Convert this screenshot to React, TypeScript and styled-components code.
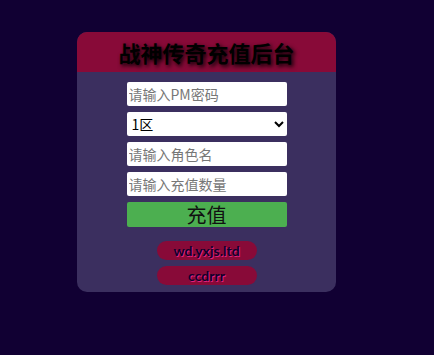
import React from "react";
import styled, { createGlobalStyle } from "styled-components";

const Global = createGlobalStyle`
  html, body { margin: 0; padding: 0; background: #110033; }
  body { font-family: "Noto Sans", "Noto Sans CJK SC", sans-serif; }
`;

const Page = styled.div`
  display: flex;
  align-items: flex-start;
  justify-content: flex-start;
  padding: 32px 0 0 77px;
  min-height: 355px;
  box-sizing: border-box;
`;

const Card = styled.div`
  width: 259px;
  background: #3b2f5f;
  border-radius: 10px;
  overflow: hidden;
  display: flex;
  flex-direction: column;
  align-items: center;
  padding-bottom: 7px;
`;

const Header = styled.div`
  width: 100%;
  height: 40px;
  background: #880a38;
  display: flex;
  align-items: center;
  justify-content: center;
`;

const Title = styled.h1`
  margin: 0;
  font-family: "Noto Sans CJK SC", sans-serif;
  font-size: 22px;
  font-weight: 700;
  color: #000;
  text-shadow: 2px 2px 4px #000;
`;

const Form = styled.div`
  margin-top: 10px;
  width: 160px;
  display: flex;
  flex-direction: column;
  gap: 6px;
`;

const Field = styled.input`
  box-sizing: border-box;
  width: 160px;
  height: 24px;
  border: none;
  border-radius: 2px;
  background: #fff;
  padding: 0 2px;
  font-family: "Noto Sans CJK SC", sans-serif;
  font-size: 14px;
  color: #000;
  outline: none;
  &::placeholder { color: #777; }
`;

const Select = styled.select`
  box-sizing: border-box;
  width: 160px;
  height: 24px;
  border: none;
  border-radius: 2px;
  background: #fff;
  font-family: "Noto Sans CJK SC", sans-serif;
  font-size: 14px;
  color: #000;
  padding: 0 0 0 1px;
  outline: none;
`;

const Submit = styled.button`
  box-sizing: border-box;
  width: 160px;
  height: 25px;
  border: none;
  border-radius: 2px;
  background: #4caf50;
  color: #111;
  font-family: "Noto Sans CJK SC", sans-serif;
  font-size: 20px;
  line-height: 25px;
  padding: 0;
`;

const Links = styled.div`
  margin-top: 14px;
  display: flex;
  flex-direction: column;
  gap: 6px;
  align-items: center;
`;

const LinkPill = styled.a`
  width: 100px;
  height: 19px;
  border-radius: 10px;
  background: #880a38;
  display: flex;
  align-items: center;
  justify-content: center;
  font-family: Lato, "Noto Sans", sans-serif;
  font-weight: 700;
  font-size: 14px;
  color: #10002a;
  text-decoration: none;
  text-shadow: 1px 1px 0 #e0207f;
`;

export default function App() {
  return (
    <>
      <Global />
      <Page>
        <Card>
          <Header>
            <Title>战神传奇充值后台</Title>
          </Header>
          <Form>
            <Field type="password" placeholder="请输入PM密码" />
            <Select defaultValue="1">
              <option value="1">1区</option>
              <option value="2">2区</option>
            </Select>
            <Field placeholder="请输入角色名" />
            <Field placeholder="请输入充值数量" />
            <Submit>充值</Submit>
          </Form>
          <Links>
            <LinkPill href="#">wd.yxjs.ltd</LinkPill>
            <LinkPill href="#">ccdrrr</LinkPill>
          </Links>
        </Card>
      </Page>
    </>
  );
}
